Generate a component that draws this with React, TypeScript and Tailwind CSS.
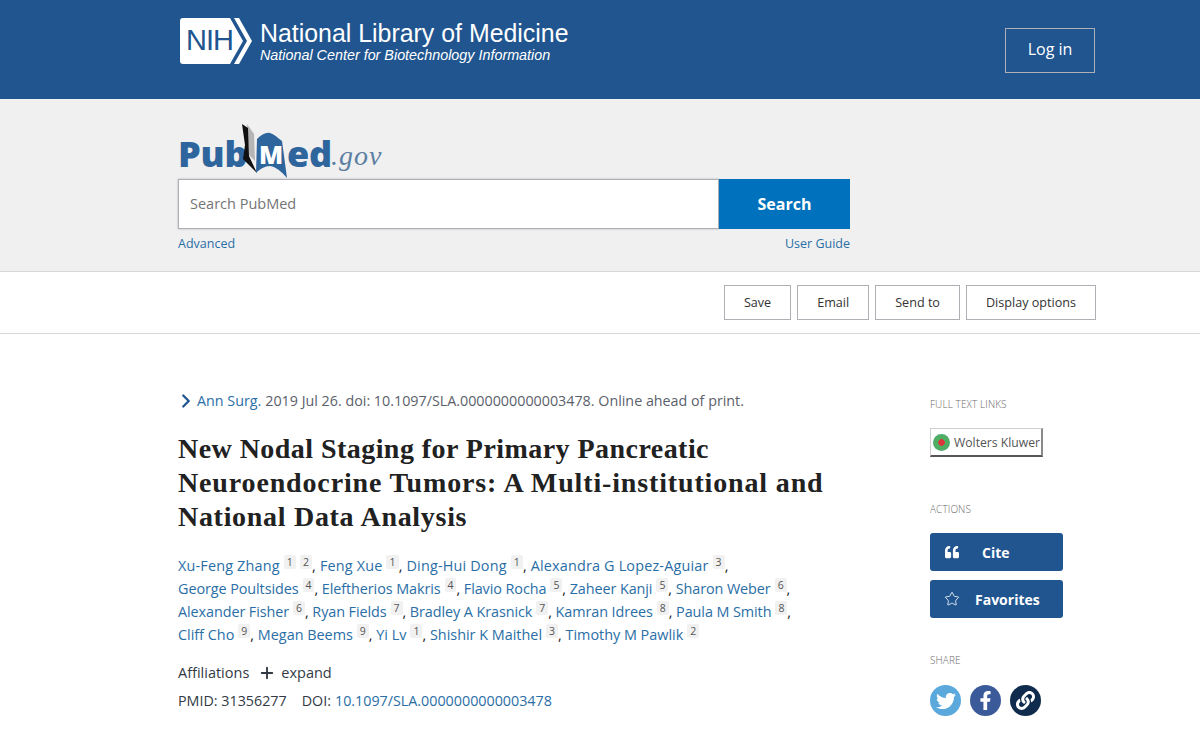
import { Plus, ChevronRight, Star } from 'lucide-react';
import { FaTwitter, FaFacebookF, FaQuoteLeft, FaLink } from 'react-icons/fa';

const authorLines = [
  {
    tracking: 'tracking-[0.18px]',
    authors: [
      { name: 'Xu-Feng Zhang', refs: ['1', '2'] },
      { name: 'Feng Xue', refs: ['1'] },
      { name: 'Ding-Hui Dong', refs: ['1'] },
      { name: 'Alexandra G Lopez-Aguiar', refs: ['3'] },
    ],
  },
  {
    tracking: 'tracking-[-0.08px]',
    authors: [
      { name: 'George Poultsides', refs: ['4'] },
      { name: 'Eleftherios Makris', refs: ['4'] },
      { name: 'Flavio Rocha', refs: ['5'] },
      { name: 'Zaheer Kanji', refs: ['5'] },
      { name: 'Sharon Weber', refs: ['6'] },
    ],
  },
  {
    tracking: 'tracking-[-0.08px]',
    authors: [
      { name: 'Alexander Fisher', refs: ['6'] },
      { name: 'Ryan Fields', refs: ['7'] },
      { name: 'Bradley A Krasnick', refs: ['7'] },
      { name: 'Kamran Idrees', refs: ['8'] },
      { name: 'Paula M Smith', refs: ['8'] },
    ],
  },
  {
    tracking: 'tracking-normal',
    authors: [
      { name: 'Cliff Cho', refs: ['9'] },
      { name: 'Megan Beems', refs: ['9'] },
      { name: 'Yi Lv', refs: ['1'] },
      { name: 'Shishir K Maithel', refs: ['3'] },
      { name: 'Timothy M Pawlik', refs: ['2'] },
    ],
  },
];

function NihLogo() {
  return (
    <div className="ml-[2px] flex items-start">
      <div className="relative h-[46px] w-[72px]">
        <svg viewBox="0 0 72 46" className="absolute inset-0 h-full w-full">
          <path d="M3 0H50L63 23L50 46H3Q0 46 0 43V3Q0 0 3 0Z" fill="#fff" />
          <path d="M54 0H59L72 23L59 46H54L67 23Z" fill="#fff" />
        </svg>
        <span className="absolute left-[6px] top-[6px] text-[29px] leading-[33px] tracking-[-1px] text-[#20558f] font-['Liberation_Sans',sans-serif]">
          NIH
        </span>
      </div>
      <div className="ml-[8px] mt-[1px] text-white font-['Liberation_Sans',sans-serif]">
        <div className="text-[24.9px] leading-[28px]">National Library of Medicine</div>
        <div className="text-[14.35px] leading-[17px] italic">National Center for Biotechnology Information</div>
      </div>
    </div>
  );
}

function PubMedLogo() {
  return (
    <div className="flex h-[56px] items-end text-[#2e659d] font-['Open_Sans',sans-serif] text-[36px] font-extrabold leading-[50px] tracking-[-0.2px]">
      <span className="w-[62px]">Pub</span>
      <div className="relative h-[56px] w-[47px]">
        <svg viewBox="0 0 47 56" className="absolute inset-0 h-full w-full">
          <path d="M7 1L14 11L15 38L9 32Z" fill="#b5b5b5" />
          <path d="M2 1L8 5L9 33L17 50L3 36L5 22Z" fill="#111" />
          <path d="M17 16C21 12 26 9 30 10C34 11 38 15 42 18L47 55C41 48 36 44 30 43C25 43 20 46 16 50Z" fill="#2e659d" />
        </svg>
        <span className="absolute left-[19px] top-[17px] text-[25px] leading-[28px] text-white">M</span>
      </div>
      <span>ed</span>
      <span className="ml-[-1px] font-['Liberation_Serif',serif] text-[28px] font-normal italic leading-[47px] tracking-[1px] text-[#5c7fa3]">
        .gov
      </span>
    </div>
  );
}

function ActionButton({ label }: { label: string }) {
  return (
    <button className="h-[35px] border border-[#aeb0b5] bg-white px-[19px] pt-[1px] text-[12.6px] text-[#333333]">
      {label}
    </button>
  );
}

function SectionLabel({ label }: { label: string }) {
  return <div className="text-[10px] font-light uppercase leading-[14px] tracking-[0.1px] text-[#6b6b6b]">{label}</div>;
}

export default function App() {
  return (
    <div className="h-[741px] overflow-hidden bg-white font-['Open_Sans',sans-serif] text-[#212121]">
      {/* NCBI header */}
      <header className="h-[99px] bg-[#20558f]">
        <div className="ml-[178px] flex w-[917px] items-start justify-between pt-[18px]">
          <NihLogo />
          <button className="mt-[10px] h-[45px] w-[90px] border border-[#aeb0b5] pb-[3px] text-[16px] text-white">Log in</button>
        </div>
      </header>

      {/* Search */}
      <section className="h-[173px] border-b border-[#d6d7d9] bg-[#f0f0f0]">
        <div className="ml-[178px] w-[672px] pt-[24px]">
          <PubMedLogo />
          <div className="flex h-[50px] w-[672px]">
            <div className="flex flex-1 items-center border border-[#aeb0b5] bg-white pl-[11px] text-[14.5px] text-[#757575] shadow-[0_0_2px_#aeb0b5]">
              Search PubMed
            </div>
            <button className="w-[131px] bg-[#0071bc] text-[16px] font-bold text-white">Search</button>
          </div>
          <div className="mt-[6px] flex w-[672px] justify-between text-[12.5px] leading-[18px] text-[#2a6ea6]">
            <a>Advanced</a>
            <a>User Guide</a>
          </div>
        </div>
      </section>

      {/* Actions bar */}
      <div className="flex h-[62px] items-center border-b border-[#d6d7d9]">
        <div className="ml-[178px] flex w-[918px] justify-end gap-[6px]">
          <ActionButton label="Save" />
          <ActionButton label="Email" />
          <ActionButton label="Send to" />
          <ActionButton label="Display options" />
        </div>
      </div>

      {/* Article */}
      <main className="ml-[178px] flex w-[917px] pt-[56px]">
        <article className="w-[752px]">
          <div className="flex h-[22px] items-center text-[14.3px] text-[#5b616b]">
            <ChevronRight className="-ml-[3px] h-[22px] w-[22px] text-[#20558f]" strokeWidth={2.5} />
            <a className="text-[#2a6ea6]">Ann Surg.</a>
            <span className="ml-[4px]">2019 Jul 26. doi: 10.1097/SLA.0000000000003478. Online ahead of print.</span>
          </div>
          <h1 className="mt-[20px] font-['Liberation_Serif',serif] text-[28px] font-bold leading-[34px] text-[#212121]">
            <div className="tracking-[0.45px]">New Nodal Staging for Primary Pancreatic</div>
            <div className="tracking-[0.85px]">Neuroendocrine Tumors: A Multi-institutional and</div>
            <div className="tracking-[0.7px]">National Data Analysis</div>
          </h1>
          <div className="mt-[20px] text-[14.4px] leading-[23px] text-[#212121]">
            {authorLines.map((line, i) => (
              <div key={i} className={`h-[23px] whitespace-nowrap ${line.tracking}`}>
                {line.authors.map((a, j) => (
                  <span key={a.name}>
                    <a className="text-[#2a6ea6]">{a.name}</a>
                    {a.refs.map((r) => (
                      <span
                        key={r}
                        className="ml-[4px] inline-block rounded-[2px] bg-[#f1f1f1] px-[3px] align-[5px] text-[10.5px] leading-[14px] text-[#555555]"
                      >
                        {r}
                      </span>
                    ))}
                    {j < line.authors.length - 1 || i < authorLines.length - 1 ? ', ' : ''}
                  </span>
                ))}
              </div>
            ))}
          </div>
          <div className="mt-[16px] flex h-[22px] items-center text-[14.5px] text-[#323a45]">
            <span>Affiliations</span>
            <Plus className="ml-[9px] mr-[5px] h-[18px] w-[18px]" strokeWidth={2.5} />
            <span>expand</span>
          </div>
          <div className="mt-[7px] text-[14.3px] leading-[20px] text-[#323a45]">
            PMID: 31356277
            <span className="ml-[15px]">DOI:</span>
            <a className="ml-[4px] text-[#2a6ea6]">10.1097/SLA.0000000000003478</a>
          </div>
        </article>

        {/* Right sidebar */}
        <aside className="w-[133px] pt-[7px]">
          <SectionLabel label="Full text links" />
          <div className="mt-[17px] flex h-[29px] w-[113px] items-center whitespace-nowrap border border-[#cfcfcf] border-b-[2px] border-r-[2px] border-b-[#555555] border-r-[#8a8a8a] bg-white pl-[2px] pt-[2px] text-[12.2px] text-[#555555]">
            <span className="mb-[2px] mr-[4px] h-[17px] w-[17px] rounded-full bg-[radial-gradient(circle,#d9363e_0%,#d9363e_25%,#4fae62_30%,#4fae62_60%,#3f9bb8_100%)]" />
            Wolters Kluwer
          </div>
          <div className="mt-[45px]">
            <SectionLabel label="Actions" />
          </div>
          <button className="mt-[17px] flex h-[38px] w-[133px] items-center rounded-[3px] bg-[#20558f] text-[14px] font-bold text-white">
            <FaQuoteLeft className="ml-[14px] h-[14px] w-[16px]" />
            <span className="ml-[22px]">Cite</span>
          </button>
          <button className="mt-[9px] flex h-[38px] w-[133px] items-center rounded-[3px] bg-[#20558f] text-[14px] font-bold text-white">
            <Star className="ml-[14px] h-[16px] w-[16px]" strokeWidth={1.25} />
            <span className="ml-[15px]">Favorites</span>
          </button>
          <div className="mt-[35px]">
            <SectionLabel label="Share" />
          </div>
          <div className="mt-[18px] flex gap-[9px]">
            <div className="flex h-[31px] w-[31px] items-center justify-center rounded-full bg-[#5aa8dc] text-white">
              <FaTwitter className="h-[20px] w-[20px]" />
            </div>
            <div className="flex h-[31px] w-[31px] items-center justify-center rounded-full bg-[#3b5a9a] text-white">
              <FaFacebookF className="h-[19px] w-[19px]" />
            </div>
            <div className="flex h-[31px] w-[31px] items-center justify-center rounded-full bg-[#0f2b4d] text-white">
              <FaLink className="h-[19px] w-[19px]" />
            </div>
          </div>
        </aside>
      </main>
    </div>
  );
}
